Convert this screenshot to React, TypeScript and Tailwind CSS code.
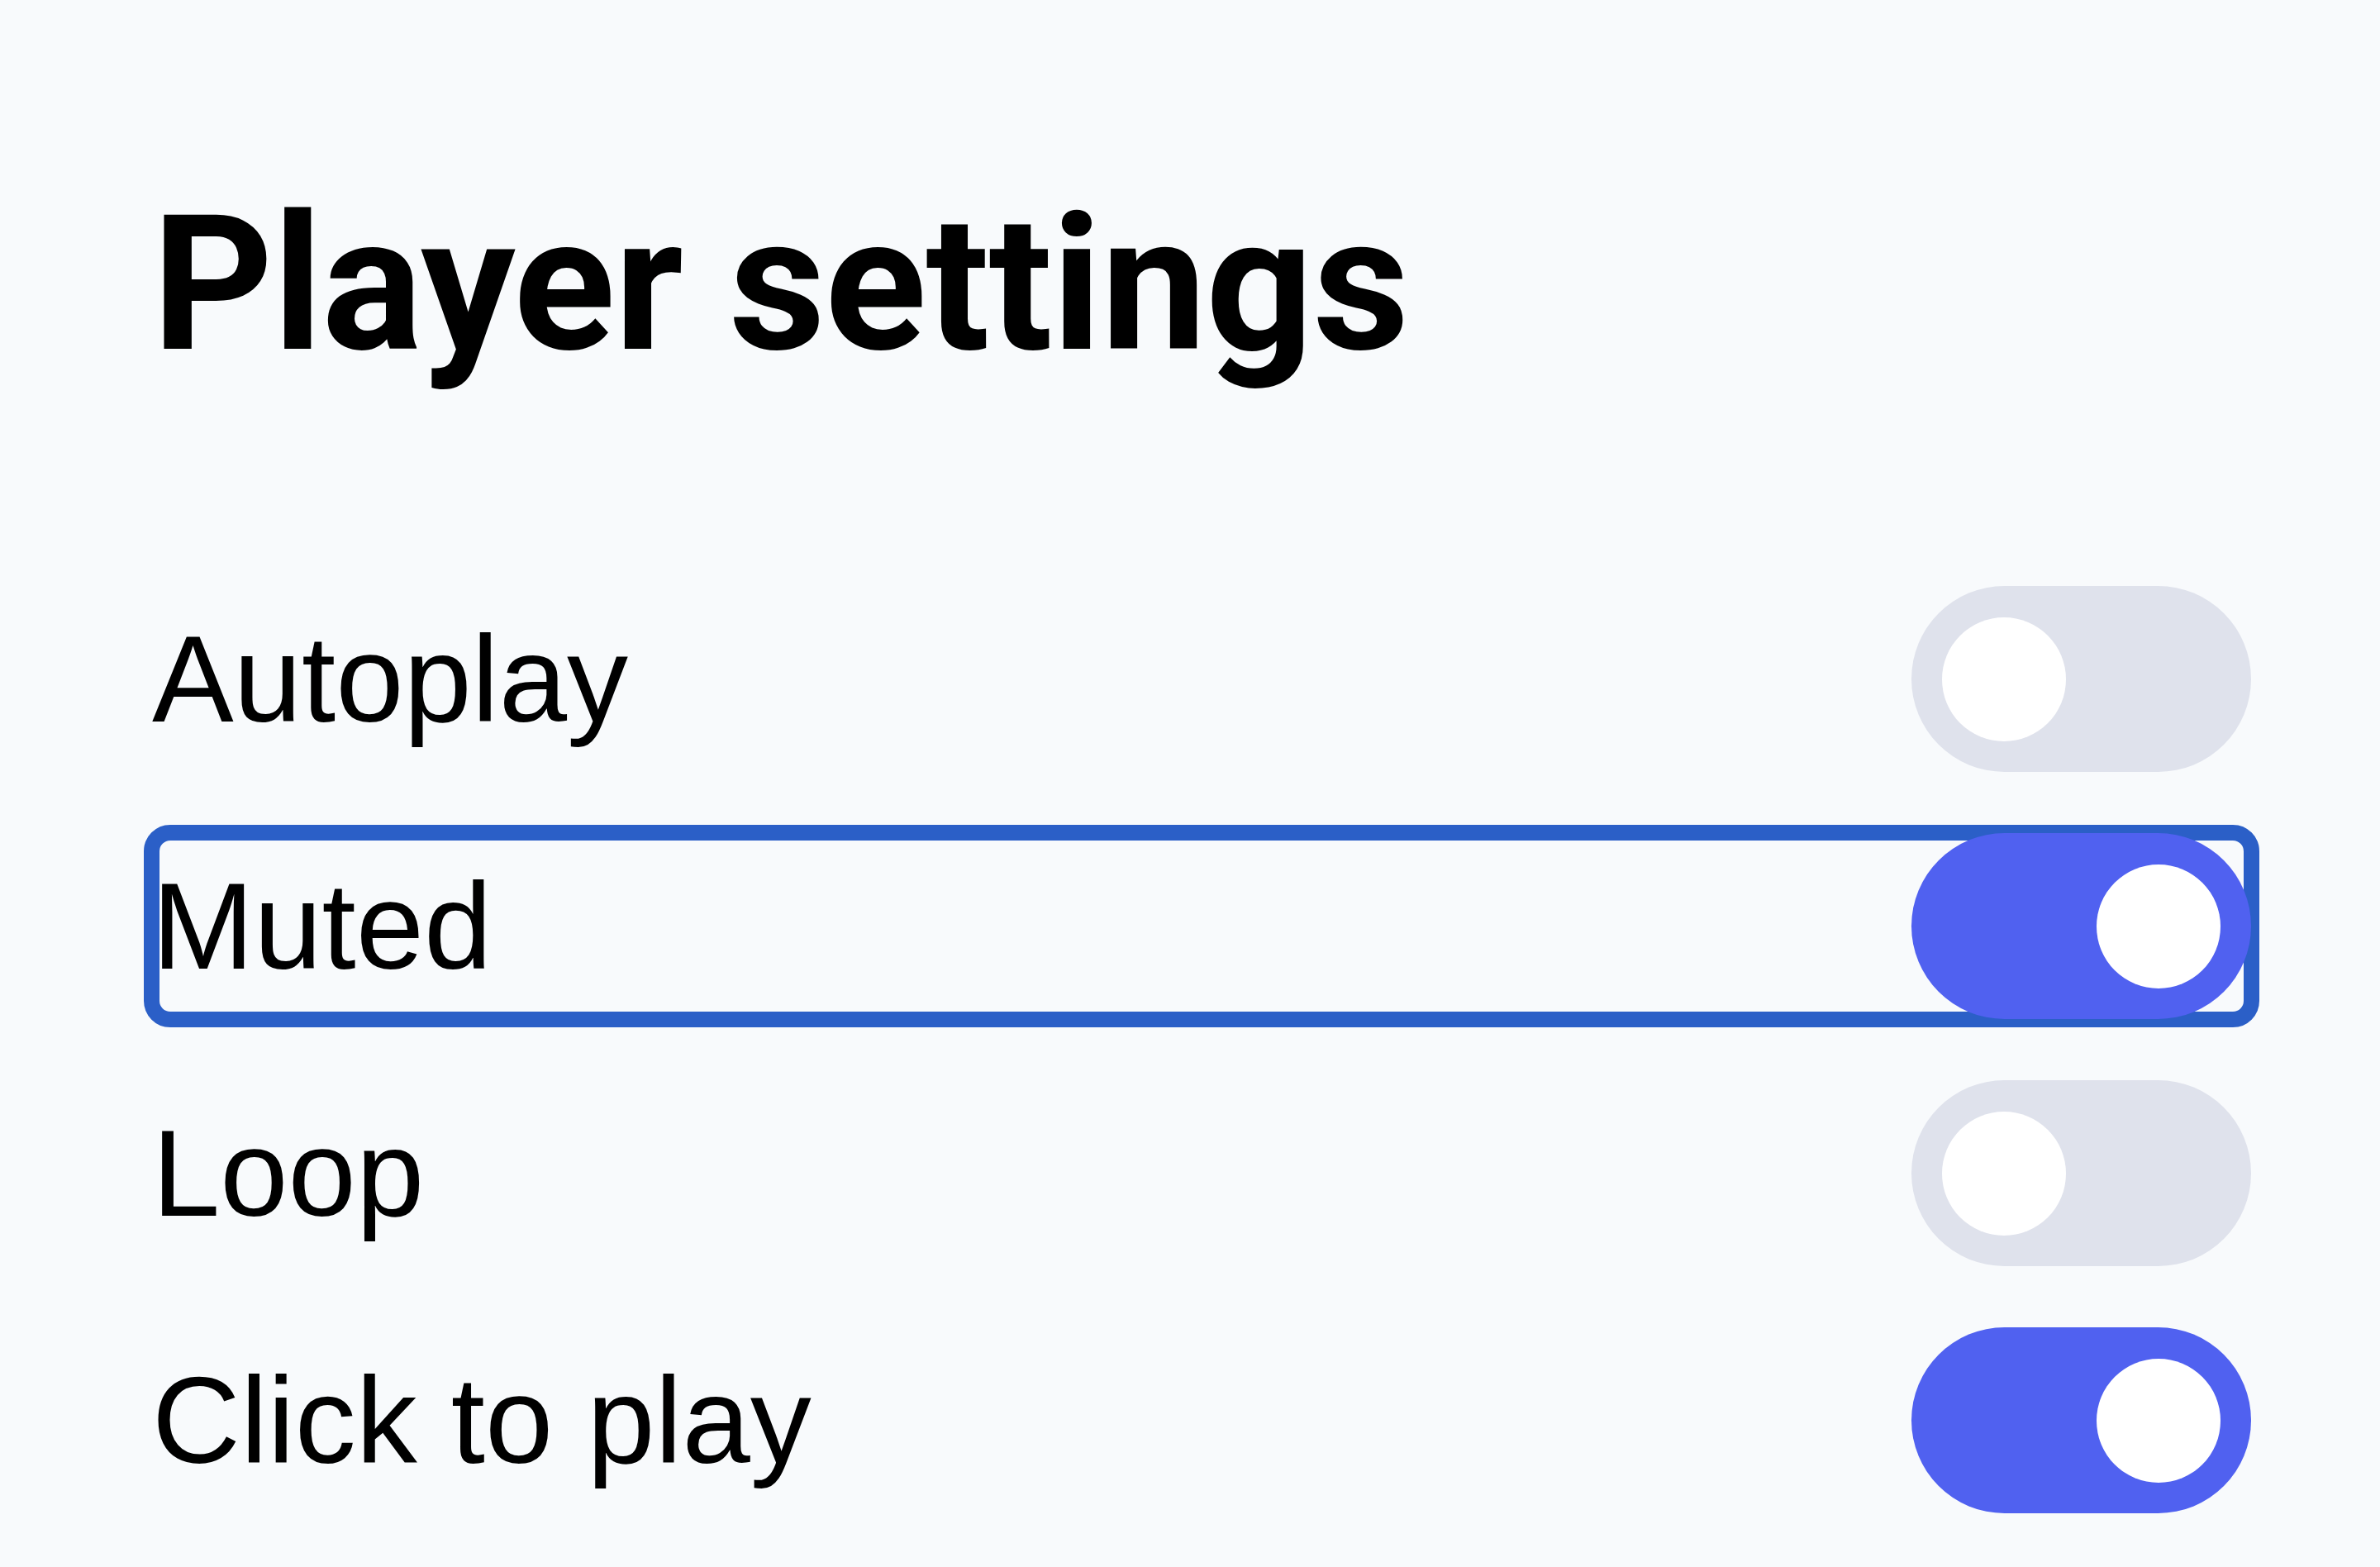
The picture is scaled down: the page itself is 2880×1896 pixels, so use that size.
import { useState } from "react";

type Setting = {
    id: string;
    label: string;
    on: boolean;
};

const initial: Setting[] = [
    { id: "autoplay", label: "Autoplay", on: false },
    { id: "muted", label: "Muted", on: true },
    { id: "loop", label: "Loop", on: false },
    { id: "click", label: "Click to play", on: true },
];

function Toggle({ on }: { on: boolean }) {
    return (
        <span
            className={`relative z-10 flex h-[225px] w-[411px] shrink-0 items-center rounded-full px-[37px] ${
                on ? "bg-[#5061f0] justify-end" : "bg-[#dfe2ec] justify-start"
            }`}
        >
            <span className="block h-[150px] w-[150px] rounded-full bg-white" />
        </span>
    );
}

export default function App() {
    const [settings, setSettings] = useState(initial);

    const flip = (id: string) =>
        setSettings((s) => s.map((x) => (x.id === id ? { ...x, on: !x.on } : x)));

    return (
        <div className="min-h-screen bg-[#f8fafc] pt-[230px] pl-[184px] pr-[156px] font-['Liberation_Sans',Arial,sans-serif] text-black">
            {/* Title */}
            <h1 className="font-['Roboto',sans-serif] text-[228px] font-bold leading-none tracking-[-0.004em]">
                Player settings
            </h1>

            {/* Rows */}
            <div className="mt-[251px] flex flex-col gap-[74px]">
                {settings.map((s) => (
                    <div
                        key={s.id}
                        onClick={() => flip(s.id)}
                        className={`flex h-[225px] cursor-pointer items-center justify-between rounded-[22px] ${
                            s.id === "muted"
                                ? "outline-solid outline-[19px] outline-offset-[-9px] outline-[#2b5fc7]"
                                : ""
                        }`}
                    >
                        <span className="text-[148px] leading-none">{s.label}</span>
                        <Toggle on={s.on} />
                    </div>
                ))}
            </div>
        </div>
    );
}
